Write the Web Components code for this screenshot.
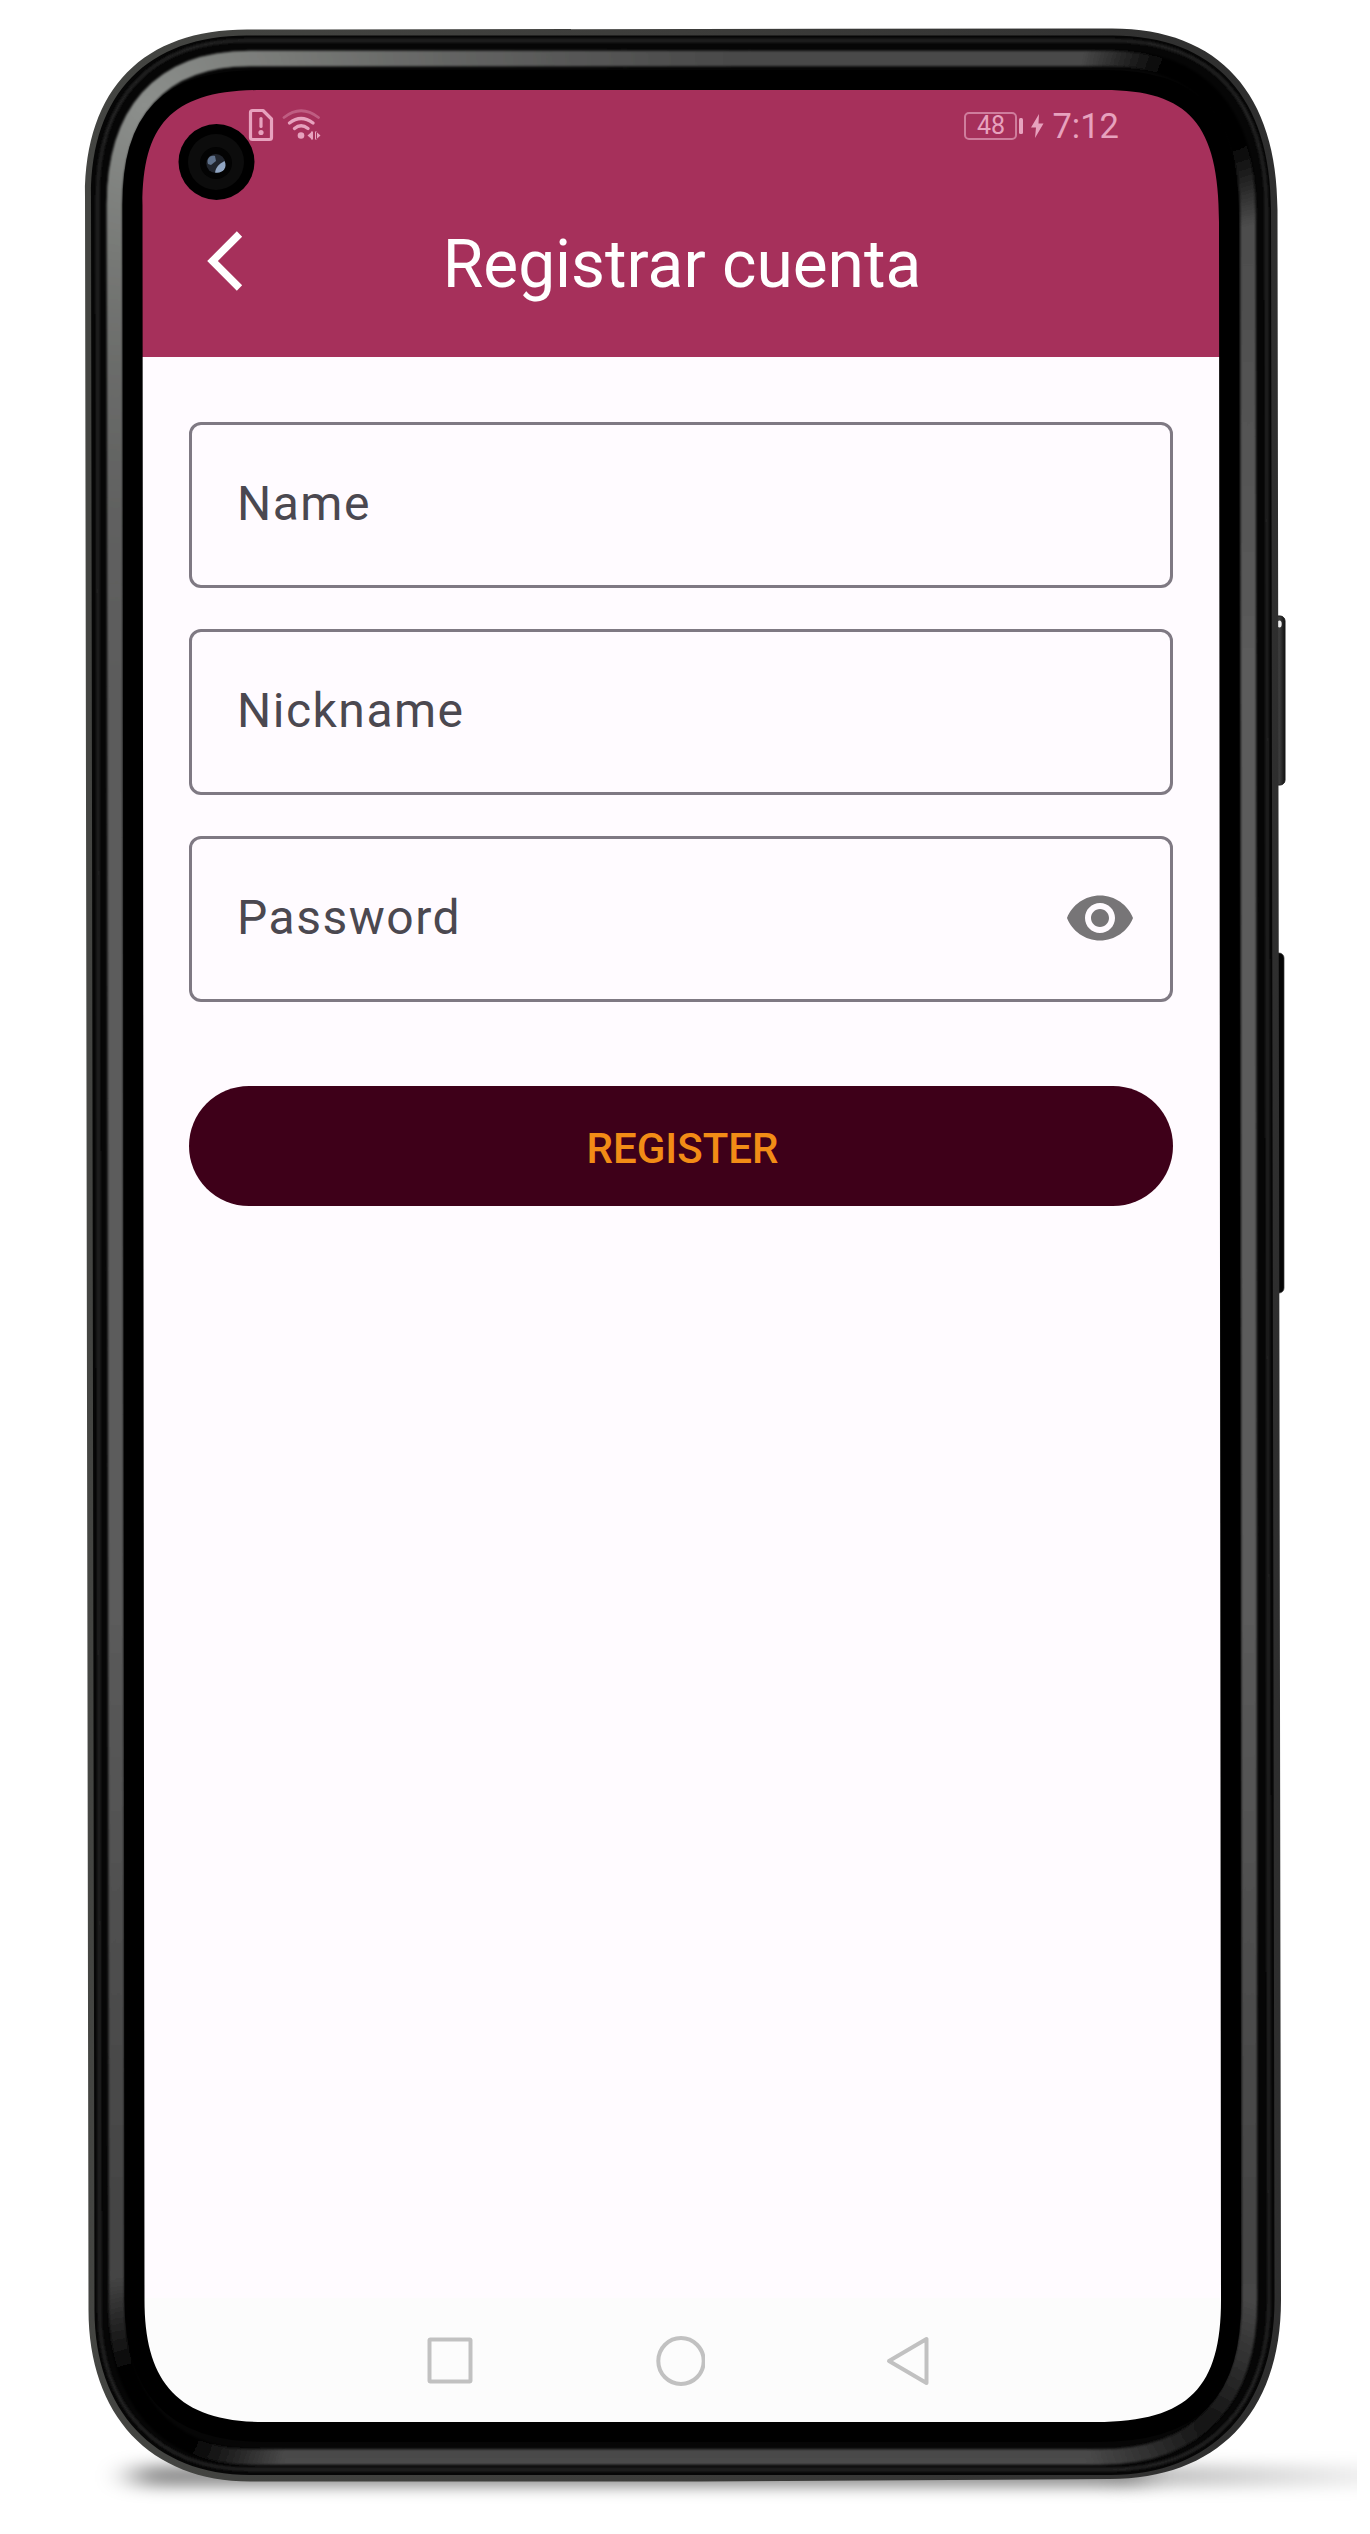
<!DOCTYPE html>
<html lang="es">
<head>
<meta charset="utf-8">
<title>Registrar cuenta</title>
<style>
  html, body { margin: 0; background: #fff; }
  body { width: 1370px; height: 2534px; overflow: hidden; font-family: Roboto, "Liberation Sans", sans-serif; }
</style>
</head>
<body>
<phone-device>
  <status-bar></status-bar>
  <app-bar>Registrar cuenta</app-bar>
  <register-form>
    <text-field>Name</text-field>
    <text-field>Nickname</text-field>
    <text-field secret>Password</text-field>
    <pill-button slot="action">REGISTER</pill-button>
  </register-form>
  <nav-bar></nav-bar>
</phone-device>
<script>
const define = (name, html) => customElements.define(name, class extends HTMLElement {
  constructor() {
    super();
    const t = document.createElement('template');
    t.innerHTML = html;
    this.attachShadow({ mode: 'open' }).append(t.content.cloneNode(true));
  }
});

define('phone-device', `
<style>
  :host { display: block; position: relative; box-sizing: border-box; width: 1370px; height: 2534px; padding: 90px 147px 110px 140px; }
  .screen { display: flex; flex-direction: column; height: 2334px; background: #fffbff; }
  svg { position: absolute; inset: 0; pointer-events: none; }
</style>
<div class="screen"><slot></slot></div>
<svg width="1370" height="2534" viewBox="0 0 1370 2534" fill="none">
  <defs>
    <filter id="soft" x="-20%" y="-150%" width="140%" height="400%"><feGaussianBlur stdDeviation="17 8"/></filter>
    <filter id="edge" filterUnits="userSpaceOnUse" x="60" y="10" width="1250" height="2500"><feGaussianBlur stdDeviation=".9"/></filter>
    <clipPath id="floor"><rect x="80" y="2430" width="1277" height="104"/></clipPath>
    <mask id="outside" maskUnits="userSpaceOnUse" x="0" y="0" width="1370" height="2534">
      <rect width="1370" height="2534" fill="#fff"/>
      <path fill="#000" d="M142.500 205C142.500 124 172 90 262 90H1104C1189 90 1219 124 1219 222L1221 2300C1221 2386 1190 2422 1096 2422H264C176 2422 144.500 2380 144.500 2300Z"/>
    </mask>
    <linearGradient id="rim" gradientUnits="userSpaceOnUse" x1="86" y1="0" x2="1280" y2="0">
      <stop offset="0" stop-color="#444542"/><stop offset=".5" stop-color="#3c3c3a"/><stop offset="1" stop-color="#2e2e2e"/>
    </linearGradient>
    <linearGradient id="band" gradientUnits="userSpaceOnUse" x1="0" y1="50" x2="0" y2="2465">
      <stop offset="0" stop-color="#484848"/><stop offset=".25" stop-color="#5b5b5b"/><stop offset=".65" stop-color="#5b5b5b"/><stop offset=".9" stop-color="#444"/><stop offset="1" stop-color="#4b4b4b"/>
    </linearGradient>
    <radialGradient id="shine" gradientUnits="userSpaceOnUse" cx="145" cy="105" r="620">
      <stop offset="0" stop-color="#8c8f8c"/><stop offset=".25" stop-color="#777976"/><stop offset="1" stop-color="#666" stop-opacity="0"/>
    </radialGradient>
    <radialGradient id="darkTR" gradientUnits="userSpaceOnUse" cx="1218" cy="90" r="140">
      <stop offset="0" stop-color="#000"/><stop offset=".4" stop-color="#000"/><stop offset="1" stop-color="#000" stop-opacity="0"/>
    </radialGradient>
    <radialGradient id="darkBL" gradientUnits="userSpaceOnUse" cx="140" cy="2424" r="150">
      <stop offset="0" stop-color="#000"/><stop offset=".35" stop-color="#000"/><stop offset="1" stop-color="#000" stop-opacity="0"/>
    </radialGradient>
    <radialGradient id="darkBR" gradientUnits="userSpaceOnUse" cx="1210" cy="2425" r="130">
      <stop offset="0" stop-color="#000" stop-opacity=".75"/><stop offset="1" stop-color="#000" stop-opacity="0"/>
    </radialGradient>
    <linearGradient id="fade" gradientUnits="userSpaceOnUse" x1="1130" y1="0" x2="1357" y2="0">
      <stop offset="0" stop-color="#000" stop-opacity=".3"/><stop offset="1" stop-color="#000" stop-opacity=".07"/>
    </linearGradient>
    <linearGradient id="key" x1="0" x2="1" y1="0" y2="0"><stop offset="0" stop-color="#4b4b4b"/><stop offset=".6" stop-color="#3a3a3a"/><stop offset="1" stop-color="#111"/></linearGradient>
  </defs>

  <g mask="url(#outside)">
    <g clip-path="url(#floor)">
      <rect x="132" y="2466" width="1010" height="20" rx="10" fill="#000" fill-opacity=".48" filter="url(#soft)"/>
      <rect x="1125" y="2466" width="280" height="20" fill="url(#fade)" filter="url(#soft)"/>
    </g>
    <rect x="1272" y="616" width="13" height="169" rx="5" fill="url(#key)" stroke="#181818"/>
    <ellipse cx="1279.500" cy="624" rx="2.200" ry="3.500" fill="#eee"/>
    <rect x="1272" y="953" width="12" height="340" rx="5" fill="#050505" stroke="#333" stroke-width=".7"/>
    <path fill="url(#rim)" d="M85 196C85 88 144 29.500 247 29.500L1112 28.500C1220 28.500 1277.500 95 1277.500 210L1281 2300C1281 2415 1215 2479 1110 2479L700 2481.500H250C150 2481.500 88.500 2415 88.500 2310Z"/>
    <path fill="#060606" d="M91 196C91 93 148 35.500 247 35.500H1112C1215 35.500 1271 98 1271 210L1274.500 2300C1274.500 2409 1211 2475 1110 2475H250C154 2475 94.500 2410 94.500 2310Z"/>
    <path stroke="#222" stroke-width="3.500" filter="url(#edge)" d="M97.500 198C97.500 98 151 40.500 247 40.500H1112C1212 40.500 1266.500 101 1266.500 210L1269 2300C1269 2406 1208 2469.500 1110 2469.500H250C157 2469.500 99.500 2407 99.500 2310Z"/>
    <g stroke-width="15.500" filter="url(#edge)">
      <path stroke="url(#band)" d="M114.500 205C114.500 115 158 58.500 250 58.500H1108C1200 58.500 1248 112 1248 214L1249.500 2300C1249.500 2398 1200 2457 1100 2457H252C164 2457 116.500 2396 116.500 2304Z"/>
      <path stroke="url(#shine)" d="M116 1000L114.500 205C114.500 115 158 58.500 250 58.500H1000"/>
      <path stroke="url(#darkTR)" stroke-width="18" d="M1000 58.500H1108C1200 58.500 1248 112 1248 214V400"/>
      <path stroke="url(#darkBL)" stroke-width="18" d="M400 2457H252C164 2457 116.500 2396 116.500 2304V2100"/>
      <path stroke="url(#darkBR)" stroke-width="18" d="M1249.500 2150V2300C1249.500 2398 1200 2457 1100 2457H1000"/>
    </g>
    <path stroke="#000" stroke-width="40" d="M142.500 205C142.500 124 172 90 262 90H1104C1189 90 1219 124 1219 222L1221 2300C1221 2386 1190 2422 1096 2422H264C176 2422 144.500 2380 144.500 2300Z"/>
  </g>

  <circle cx="216.500" cy="162" r="38" fill="#000"/>
  <circle cx="216" cy="162" r="28" fill="#0c0c0c"/>
  <circle cx="216" cy="163" r="16" fill="#030303"/>
  <circle cx="215.800" cy="163.500" r="9.500" fill="#20242c"/>
  <path d="M215 172.500C216 167 219 164 224.500 161C228 168 222 174 215 172.500Z" fill="#91a6c3"/>
  <path d="M208 164C206 158 211 154.500 215 156L216 161L211 165Z" fill="#60728c"/>
</svg>`);

define('status-bar', `
<style>
  :host { display: flex; justify-content: space-between; align-items: center; flex: none; height: 72px; padding: 0 104px 0 107px; background: #a6305b; color: #e7a2be; }
  div { display: flex; align-items: center; }
  svg { display: block; }
  .battery { box-sizing: border-box; width: 53px; height: 28px; border: 2px solid #cf7d9d; border-radius: 5px; justify-content: center; font-size: 25px; line-height: 26px; }
  .nub { width: 4px; height: 16px; border-radius: 1.500px; background: currentColor; margin-left: 2px; }
  .bolt { margin: 0 8px 0 8px; }
  .time { font-size: 34.500px; line-height: 40px; }
</style>
<div>
  <svg width="76" height="36" viewBox="247 107 76 36" fill="none" stroke="currentColor">
    <path stroke-width="3.200" stroke-linejoin="round" d="M252.500 109.500H263L271.500 118V136.500Q271.500 138.500 269.500 138.500H252.500Q250.500 138.500 250.500 136.500V111.500Q250.500 109.500 252.500 109.500Z"/>
    <path stroke-width="3.200" stroke-linecap="round" d="M261 117.500V125.500"/>
    <circle cx="261" cy="131.500" r="2.600" fill="currentColor" stroke="none"/>
    <path stroke-width="2.800" stroke-linecap="round" stroke-opacity=".4" d="M284 116.500Q301 103 318.500 116.500"/>
    <path stroke-width="3.400" stroke-linecap="round" d="M289.500 122Q301 113 313 122"/>
    <path stroke-width="3.400" stroke-linecap="round" d="M294.500 127.500Q301 122 308 127.500"/>
    <circle cx="301" cy="134.500" r="3.300" fill="currentColor" stroke="none"/>
    <path fill="currentColor" stroke="none" d="M307.500 134.500L312 130.500V138.500ZM320.500 134.500L316 130.500V138.500ZM311 130.500H313V138.500H311ZM315 130.500H317V138.500H315Z"/>
  </svg>
</div>
<div>
  <div class="battery">48</div><span class="nub"></span>
  <svg class="bolt" width="13" height="24" viewBox="0 0 13 24"><path fill="currentColor" d="M8 0L0 13.500H5L4 24L12.500 9.500H7.500Z"/></svg>
  <span class="time">7:12</span>
</div>`);

define('app-bar', `
<style>
  :host { display: grid; grid-template-columns: 100px 1fr 99px; align-items: center; flex: none; box-sizing: border-box; height: 195px; padding-top: 10px; background: #a6305b; color: #fff; }
  svg { display: block; margin: -8px 0 0 63px; }
  h1 { margin: 0; font-size: 65.800px; font-weight: 400; line-height: 78px; text-align: center; white-space: nowrap; }
</style>
<svg width="44" height="66" viewBox="0 0 44 66"><path d="M36.500 6L9.500 33L36.500 60" fill="none" stroke="currentColor" stroke-width="7.500"/></svg>
<h1><slot></slot></h1>`);

define('register-form', `
<style>
  :host { display: flex; flex-direction: column; flex: 1; padding: 65px 50px 0 49px; }
  .fields { display: flex; flex-direction: column; gap: 41px; }
  .action { margin-top: 84px; }
</style>
<div class="fields"><slot></slot></div>
<div class="action"><slot name="action"></slot></div>`);

define('text-field', `
<style>
  :host { display: flex; align-items: center; justify-content: space-between; box-sizing: border-box; height: 166px; padding: 0 34px 3px 45px; border: 3px solid #7f7983; border-radius: 12px; color: #4b4850; font-size: 48px; letter-spacing: 1.500px; }
  svg { display: none; fill: #777577; }
  :host([secret]) svg { display: block; }
</style>
<span><slot></slot></span>
<svg width="72" height="72" viewBox="0 0 24 24"><path d="M12 4.500C7 4.500 2.730 7.610 1 12c1.730 4.390 6 7.500 11 7.500s9.270-3.110 11-7.500c-1.730-4.390-6-7.500-11-7.500zM12 17c-2.760 0-5-2.240-5-5s2.240-5 5-5 5 2.240 5 5-2.240 5-5 5zm0-8c-1.660 0-3 1.340-3 3s1.340 3 3 3 3-1.340 3-3-1.340-3-3-3z"/></svg>`);

define('pill-button', `
<style>
  :host { display: block; }
  button { display: flex; align-items: center; justify-content: center; width: 100%; height: 120px; padding: 4px 0 0 3px; border: 0; border-radius: 60px; background: #3e0019; color: #f28c16; font: 500 42px Roboto, "Liberation Sans", sans-serif; }
</style>
<button type="button"><slot></slot></button>`);

define('nav-bar', `
<style>
  :host { display: flex; justify-content: space-between; align-items: center; flex: none; box-sizing: border-box; height: 126px; padding: 0 291px 0 285px; background: #fcfcfc; }
  svg { display: block; fill: none; stroke: #c1c1c1; stroke-width: 4; stroke-linejoin: round; }
</style>
<svg width="50" height="52"><rect x="4.500" y="4.500" width="41" height="42" rx="1"/></svg>
<svg width="52" height="52"><ellipse cx="28" cy="26" rx="22.700" ry="23"/></svg>
<svg width="50" height="52"><path d="M7 26L44.500 4V48Z"/></svg>`);
</script>
</body>
</html>
